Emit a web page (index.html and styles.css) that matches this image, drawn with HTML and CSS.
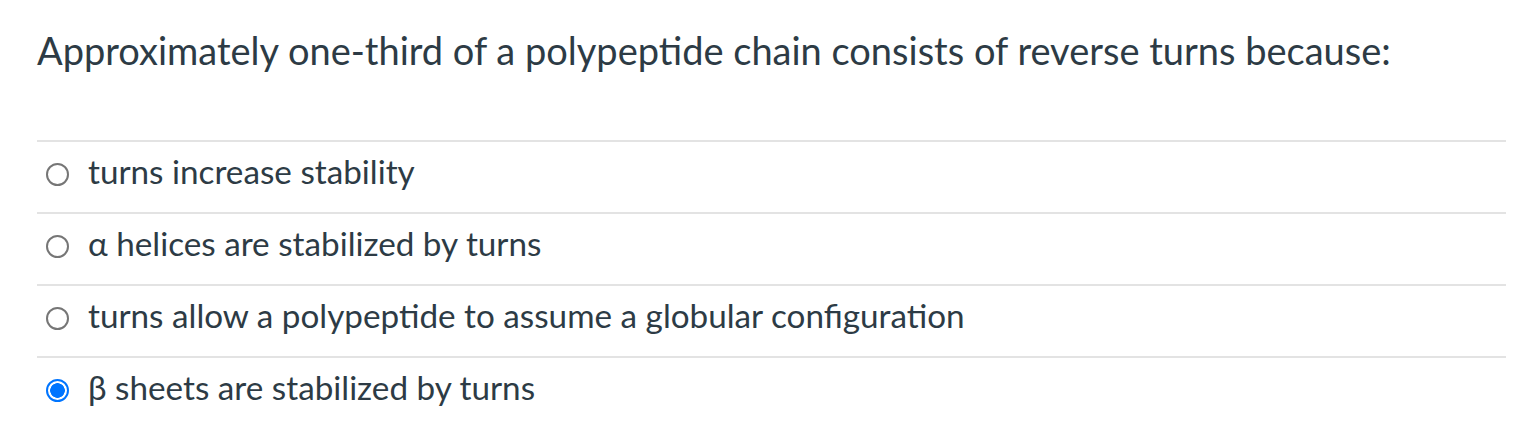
FILE: index.html
```html
<!DOCTYPE html>
<html lang="en">
<head>
<meta charset="utf-8">
<title>Question</title>
<link rel="stylesheet" href="styles.css">
</head>
<body>
<div class="question">
  <div class="question-text">Approximately one-third of a polypeptide chain consists of reverse turns because:</div>
  <div class="answers">
    <div class="answer">
      <span class="radio"></span>
      <span class="answer-label">turns increase stability</span>
    </div>
    <div class="answer">
      <span class="radio"></span>
      <span class="answer-label">α helices are stabilized by turns</span>
    </div>
    <div class="answer">
      <span class="radio"></span>
      <span class="answer-label">turns allow a polypeptide to assume a globular configuration</span>
    </div>
    <div class="answer">
      <span class="radio checked"></span>
      <span class="answer-label">β sheets are stabilized by turns</span>
    </div>
  </div>
</div>
</body>
</html>
```
FILE: styles.css
```css
html, body {
  margin: 0;
  padding: 0;
  background: #ffffff;
}

body {
  font-family: Lato, "Open Sans", sans-serif;
  color: #2d3b45;
}

.question {
  padding: 22px 18px 0 37px;
}

.question-text {
  font-size: 38px;
  line-height: 57px;
  margin-bottom: 61px;
}

.answer {
  display: flex;
  align-items: flex-start;
  border-top: 2px solid #e3e3e3;
  height: 61px;
  padding-top: 9px;
}

.radio {
  box-sizing: border-box;
  width: 23px;
  height: 23px;
  border-radius: 50%;
  border: 2px solid #767676;
  margin: 11.5px 19px 0 9px;
  flex: none;
  background: #fff;
}

.radio.checked {
  border-color: #0075ff;
  background: radial-gradient(circle, #0075ff 0 7px, #ffffff 7.6px);
}

.answer-label {
  font-size: 33.25px;
  line-height: 40px;
}
```
